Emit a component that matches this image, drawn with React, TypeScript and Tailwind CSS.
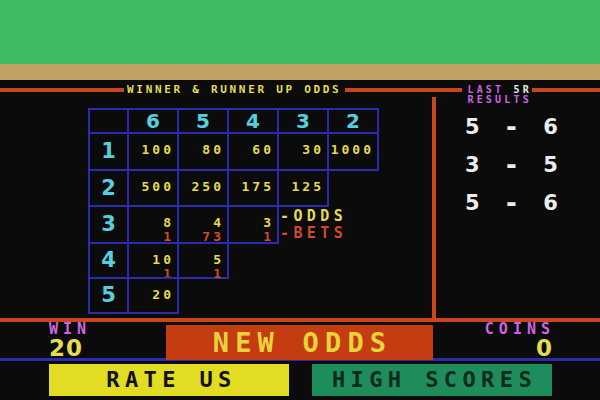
const font = "font-['DejaVu_Sans_Mono','Liberation_Mono',monospace] font-bold";
const digits = "font-['DejaVu_Sans','Liberation_Sans',sans-serif] font-bold";

type Cell = { odds: string; bets?: string };

const COLS = ['6', '5', '4', '3', '2'];

const ROWS: { label: string; h: string; cells: Cell[] }[] = [
  {
    label: '1',
    h: 'h-[39px]',
    cells: [{ odds: '100' }, { odds: '80' }, { odds: '60' }, { odds: '30' }, { odds: '1000' }],
  },
  {
    label: '2',
    h: 'h-[38px]',
    cells: [{ odds: '500' }, { odds: '250' }, { odds: '175' }, { odds: '125' }],
  },
  {
    label: '3',
    h: 'h-[39px]',
    cells: [
      { odds: '8', bets: '1' },
      { odds: '4', bets: '73' },
      { odds: '3', bets: '1' },
    ],
  },
  {
    label: '4',
    h: 'h-[37px]',
    cells: [
      { odds: '10', bets: '1' },
      { odds: '5', bets: '1' },
    ],
  },
  { label: '5', h: 'h-[37px]', cells: [{ odds: '20' }] },
];

const RESULTS = [
  ['5', '6'],
  ['3', '5'],
  ['5', '6'],
];

function OddsTable() {
  return (
    <div className="flex flex-col">
      {/* column headers */}
      <div className="flex h-[26px]">
        <div className="w-[41px] border-2 border-[#2b2bb0]" />
        {COLS.map(c => (
          <div
            key={c}
            className={`-ml-[2px] flex w-[52px] items-center justify-center border-2 border-[#2b2bb0] text-[20px] leading-none text-[#54cfe0] ${digits}`}
          >
            {c}
          </div>
        ))}
      </div>

      {ROWS.map((row, ri) => (
        <div key={row.label} className={`-mt-[2px] flex ${row.h}`}>
          <div
            className={`flex w-[41px] items-center justify-center border-2 border-[#2b2bb0] text-[21px] leading-none text-[#54cfe0] ${digits}`}
          >
            {row.label}
          </div>
          {row.cells.map((cell, ci) => (
            <div
              key={ci}
              className={`-ml-[2px] flex w-[52px] flex-col items-end border-2 border-[#2b2bb0] pt-[9px] pr-[3px] text-[13px] leading-[13px] tracking-[3px] ${font}`}
            >
              <span className="text-[#e4dc50]">{cell.odds}</span>
              {cell.bets && <span className="mt-[1px] text-[#d24a2c]">{cell.bets}</span>}
            </div>
          ))}
          {ri === 2 && (
            <div className={`flex flex-col pt-[3px] pl-[1px] text-[15px] leading-[16px] tracking-[4.4px] ${font}`}>
              <span className="text-[#e4dc50]">-ODDS</span>
              <span className="mt-[1px] text-[#d24a2c]">-BETS</span>
            </div>
          )}
        </div>
      ))}
    </div>
  );
}

export default function App() {
  return (
    <div className="flex h-[400px] w-[600px] flex-col overflow-hidden bg-[#0b0b0b]">
      <div className="h-[64px] bg-[#3dbb60]" />
      <div className="h-[16px] bg-[#c2a063]" />

      {/* board */}
      <div className="flex h-[238px] flex-col">
        <div className={`mt-[5px] flex h-[12px] items-start text-[11px] leading-[10px] tracking-[2.7px] ${font}`}>
          <div className="mt-[3px] h-[4px] w-[124px] bg-[#c9461c]" />
          <span className="ml-[3px] text-[#e4dc50]">WINNER &amp; RUNNER UP ODDS</span>
          <div className="mt-[3px] ml-[4px] h-[4px] w-[117px] bg-[#c9461c]" />
          <div className="ml-[5px] flex flex-col text-[10px] leading-[10px] tracking-[3.2px]">
            <span>
              <span className="text-[#cc66e0]">LAST </span>
              <span className="text-[#ececec]">5R</span>
            </span>
            <span className="text-[#cc66e0]">RESULTS</span>
          </div>
          <div className="mt-[3px] h-[4px] flex-1 bg-[#c9461c]" />
        </div>

        <div className="flex flex-1">
          <div className="w-[432px] pt-[11px] pl-[88px]">
            <OddsTable />
          </div>
          <div className="w-[4px] bg-[#c9461c]" />
          <div className={`flex flex-col pt-[11px] pl-[29px] text-[21px] leading-[38px] text-[#ececec] ${digits}`}>
            {RESULTS.map(([a, b], i) => (
              <div key={i} className="flex w-[93px] justify-between">
                <span>{a}</span>
                <span className="text-[26px]">-</span>
                <span>{b}</span>
              </div>
            ))}
          </div>
        </div>
      </div>

      <div className="h-[4px] bg-[#c9461c]" />

      {/* status */}
      <div className={`flex h-[36px] items-start ${font}`}>
        <div className="flex w-[166px] flex-col pl-[49px]">
          <span className="text-[15px] leading-[14px] tracking-[5px] text-[#cc66e0]">WIN</span>
          <span className={`mt-[2px] text-[23px] leading-[21px] tracking-[1px] text-[#e4dc50] ${digits}`}>20</span>
        </div>
        <button className="relative z-10 mt-[3px] flex h-[35px] w-[267px] items-center justify-center bg-[#c63c12] pl-[6px] text-[27px] leading-none tracking-[6.2px] text-[#e8d43a]">
          NEW ODDS
        </button>
        <div className="flex flex-1 flex-col items-end pr-[45px]">
          <span className="text-[15px] leading-[14px] tracking-[5px] text-[#cc66e0]">COINS</span>
          <span className={`mt-[2px] pr-[3px] text-[23px] leading-[21px] text-[#e4dc50] ${digits}`}>0</span>
        </div>
      </div>

      <div className="h-[3px] bg-[#2b2bb0]" />

      <div className={`flex gap-[23px] pt-[3px] pl-[49px] text-[22px] leading-none tracking-[5.4px] ${font}`}>
        <button className="flex h-[32px] w-[240px] items-center justify-center bg-[#e2dc22] pl-[5px] text-[#111]">
          RATE US
        </button>
        <button className="flex h-[32px] w-[240px] items-center justify-center bg-[#1f8c5c] pl-[5px] text-[#0d2b1c]">
          HIGH SCORES
        </button>
      </div>
    </div>
  );
}
